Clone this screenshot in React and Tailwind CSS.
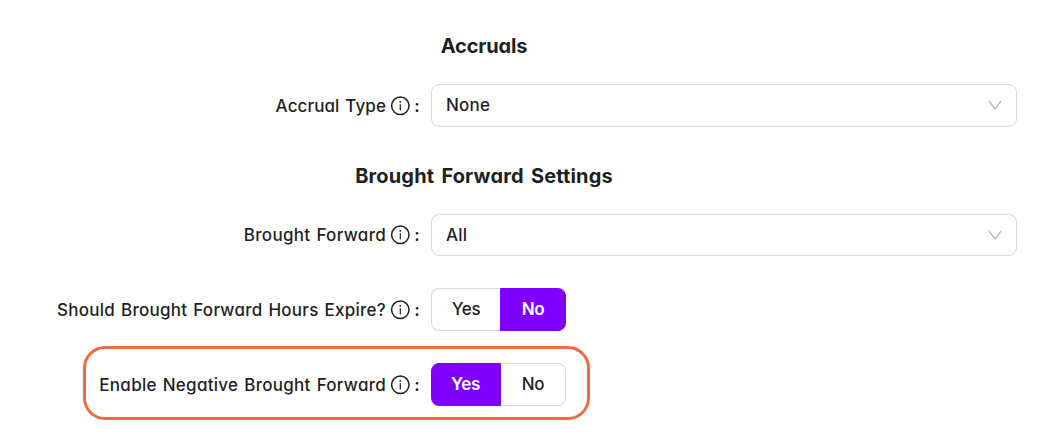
import React, { useState } from 'react'

function InfoIcon() {
  return (
    <svg className="h-5 w-5 shrink-0" viewBox="0 0 20 20" fill="none" aria-hidden>
      <circle cx="10.3" cy="9.8" r="8.7" stroke="currentColor" strokeWidth="1.5" />
      <rect x="9.7" y="8.2" width="1.2" height="6.2" fill="currentColor" />
      <circle cx="10.3" cy="5.9" r="0.9" fill="currentColor" />
    </svg>
  )
}

function Heading({ children, className }) {
  return (
    <h2 className={`w-[968px] text-center text-[20px] leading-7 font-bold ${className}`}>
      <span>{children}</span>
    </h2>
  )
}

function Label({ children, className }) {
  return (
    <div className="flex w-[420px] shrink-0 items-center justify-end">
      <span className={`whitespace-nowrap [word-spacing:1.2px] ${className}`}>{children}</span>
      <span className="ml-1 flex"><InfoIcon /></span>
      <span className="ml-1 w-[6px] text-center font-semibold">:</span>
    </div>
  )
}

function Select({ value, className }) {
  return (
    <button type="button" className={`ml-[11px] flex w-[586px] items-center justify-between rounded-lg border border-[#d9d9d9] bg-white pr-[14px] pl-[14px] ${className}`}>
      <span>{value}</span>
      <svg className="h-[10px] w-[14px] text-[#b8b8b8]" viewBox="0 0 14 10" fill="none" aria-hidden>
        <path d="M1 1L7 9L13 1" stroke="currentColor" strokeWidth="1.3" />
      </svg>
    </button>
  )
}

function YesNo({ initial }) {
  const [value, setValue] = useState(initial)
  const on = 'border-[#7f00ff] bg-[#7f00ff] text-white font-semibold'
  const off = 'border-[#d9d9d9] bg-white'
  const yes = value === 'Yes'

  return (
    <div className="ml-[11px] flex h-[43px] w-[135px]">
      <button type="button" onClick={() => setValue('Yes')} className={`rounded-l-lg border pb-[2px] tracking-[-0.3px] ${yes ? `w-[70px] pr-px ${on}` : `w-[69px] border-r-0 ${off}`}`}>Yes</button>
      <button type="button" onClick={() => setValue('No')} className={`rounded-r-lg border pb-[2px] tracking-[-0.3px] ${yes ? `w-[65px] border-l-0 ${off}` : `w-[66px] ${on}`}`}>No</button>
    </div>
  )
}

export default function App() {
  return (
    <div className="h-[436px] w-[1064px] overflow-hidden bg-white pt-8 font-['Inter','Lato',sans-serif] text-[17px] leading-6 font-medium text-[#1f1f1f] [font-feature-settings:'cv11']">
      <Heading className="tracking-[-0.18px]">Accruals</Heading>
      <div className="mt-6 flex h-[43px]">
        <Label className="tracking-[0.1px]">Accrual Type</Label>
        <Select value="None" className="h-[43px] pb-[2px] tracking-[0.2px]" />
      </div>

      <Heading className="mt-[35px] tracking-[0.15px] [word-spacing:2.3px]">Brought Forward Settings</Heading>
      <div className="mt-6 flex h-[42px]">
        <Label className="tracking-[0.3px]">Brought Forward</Label>
        <Select value="All" className="h-[42px] tracking-[0.2px]" />
      </div>
      <div className="mt-8 flex h-[43px]">
        <Label className="tracking-[0.25px]">Should Brought Forward Hours Expire?</Label>
        <YesNo initial="No" />
      </div>

      {/* highlighted row */}
      <div className="mt-[15px] ml-[83px] flex h-[74px] w-[507px] items-start justify-end rounded-[22px] border-3 border-[#ee6c45] pt-[14px] pr-[21px]">
        <div className="flex h-[43px]">
          <Label className="tracking-[0.27px]">Enable Negative Brought Forward</Label>
          <YesNo initial="Yes" />
        </div>
      </div>
    </div>
  )
}
